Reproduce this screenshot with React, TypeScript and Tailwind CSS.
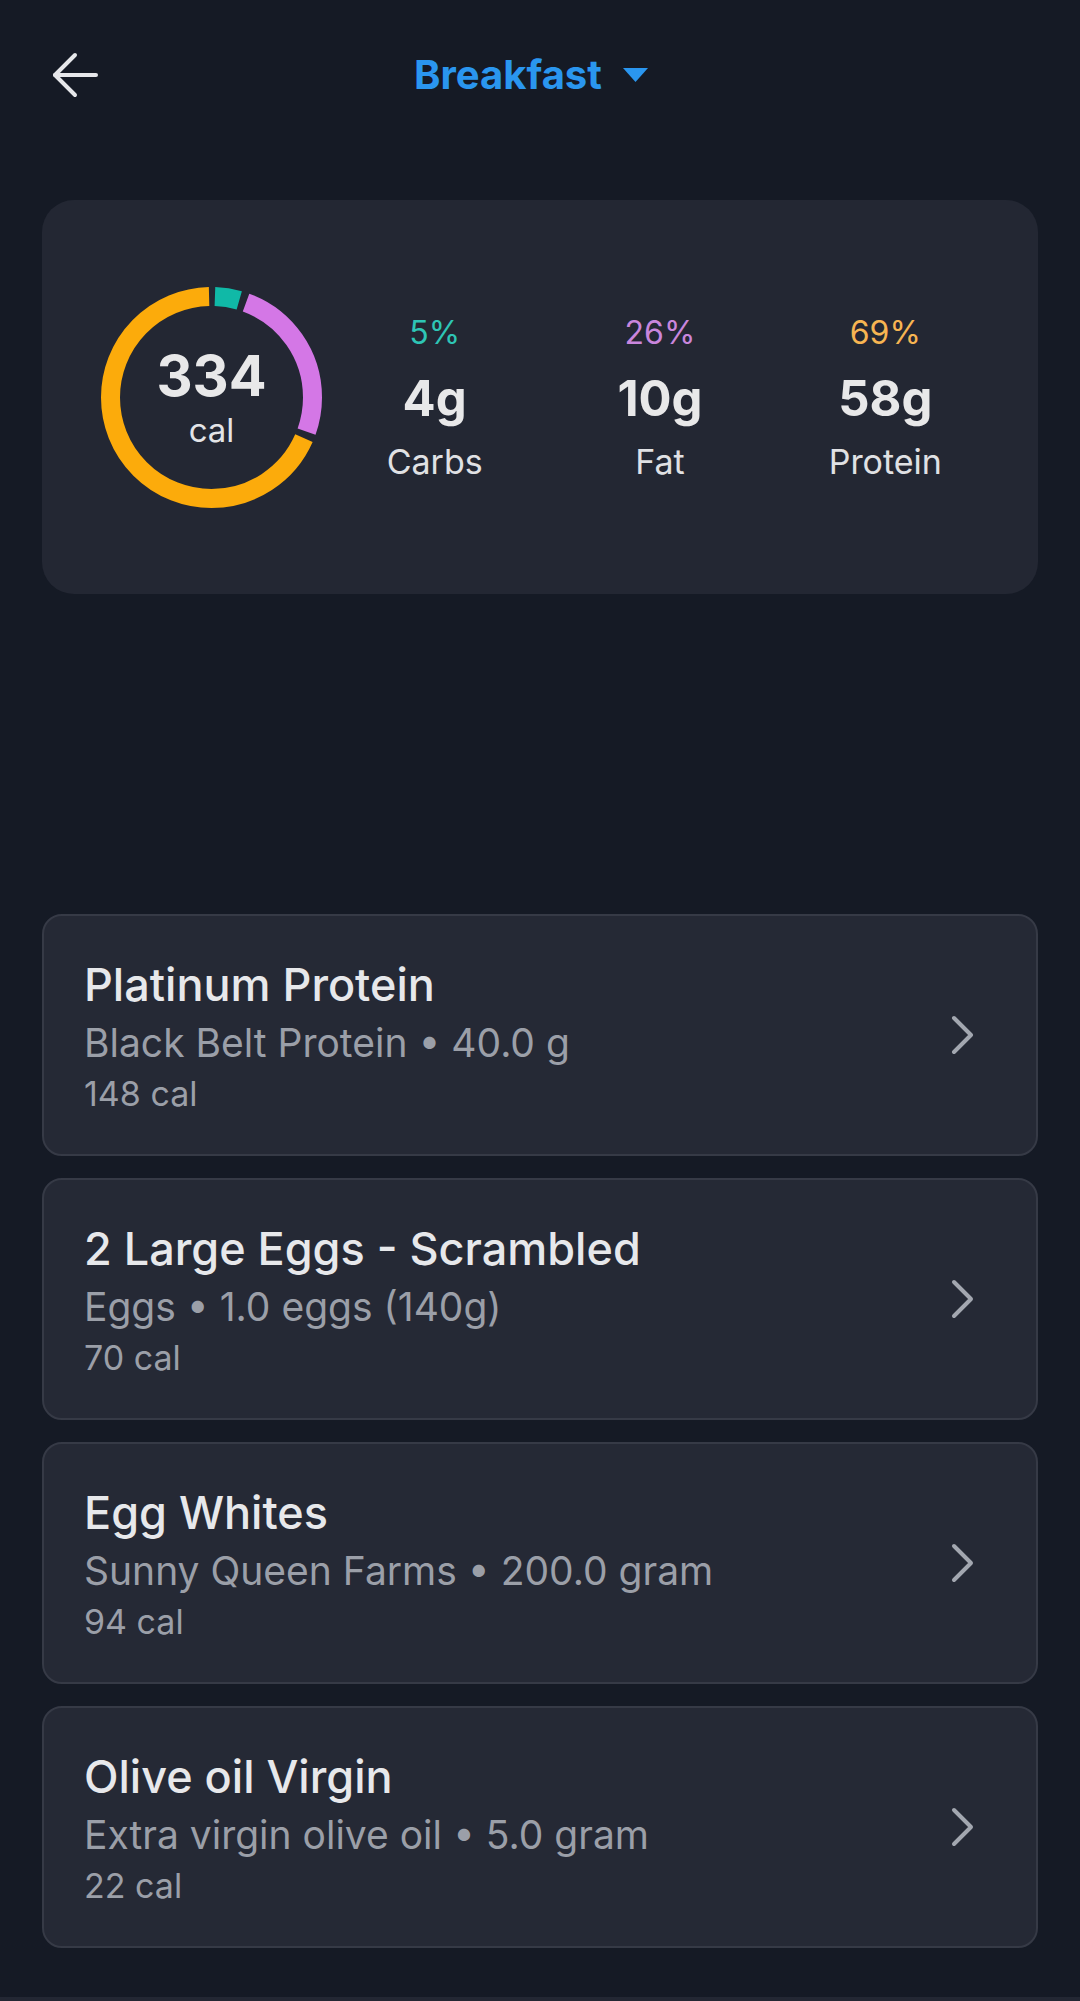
import React from "react";

const C = 2 * Math.PI * 101;

function Ring() {
  const segs = [
    { pct: 0.05, color: "#10b9a7" },
    { pct: 0.26, color: "#d477e6" },
    { pct: 0.69, color: "#fcab0b" },
  ];
  const gap = 4;
  let cum = 0;
  return (
    <div className="relative w-[221px] h-[221px] shrink-0">
      <svg width="221" height="221" viewBox="0 0 221 221" className="absolute inset-0">
        {segs.map((s, i) => {
          const a0 = cum * 360 + gap / 2;
          const len = (s.pct * 360 - gap) / 360 * C;
          const off = -(a0 / 360) * C;
          cum += s.pct;
          return (
            <circle
              key={i}
              cx="110.5"
              cy="110.5"
              r="101"
              fill="none"
              stroke={s.color}
              strokeWidth="19"
              strokeDasharray={`${len} ${C}`}
              strokeDashoffset={off}
              transform="rotate(-90 110.5 110.5)"
            />
          );
        })}
      </svg>
      <div className="absolute inset-0 flex flex-col items-center justify-center">
        <div className="text-[56px] leading-[60px] font-bold text-[#e8e8e9]">334</div>
        <div className="text-[33px] leading-[36px] mt-[6px] text-[#e3e4e7]">cal</div>
      </div>
    </div>
  );
}

function Macro({ pct, val, label, color }: { pct: string; val: string; label: string; color: string }) {
  return (
    <div className="flex-1 flex flex-col items-center">
      <div className={`text-[32px] leading-[40px] ${color}`}>{pct}</div>
      <div className="text-[49px] leading-[56px] mt-[18px] font-bold text-[#e8e8e9]">{val}</div>
      <div className="text-[34px] leading-[40px] mt-[15px] text-[#e0e1e4]">{label}</div>
    </div>
  );
}

function Item({ title, sub, cal }: { title: string; sub: string; cal: string }) {
  return (
    <div className="h-[242px] rounded-[20px] border-2 border-[#363a46] bg-[#252935] flex items-center pl-[40px] pr-[61px]">
      <div className="flex-1 flex flex-col">
        <div className="text-[45px] leading-[56px] font-medium text-[#e7e8eb]">{title}</div>
        <div className="text-[39px] leading-[52px] mt-[4px] text-[#9b9fa8]">{sub}</div>
        <div className="text-[34px] leading-[40px] mt-[5px] text-[#9b9fa8]">{cal}</div>
      </div>
      <svg width="25" height="40" viewBox="0 0 25 40" className="shrink-0">
        <polyline points="4,3 21,20 4,37" fill="none" stroke="#a3a7b0" strokeWidth="4" strokeLinecap="round" strokeLinejoin="round" />
      </svg>
    </div>
  );
}

export default function App() {
  return (
    <div className="w-full min-h-[2001px] bg-[#151a25] flex flex-col font-[family-name:Inter,sans-serif]">
      <div className="h-[150px] grid grid-cols-[1fr_auto_1fr] items-center">
        <div className="pl-[52px] flex items-center">
          <svg width="46" height="46" viewBox="0 0 46 46">
            <polyline points="23,3 3,23 23,43" fill="none" stroke="#e6e7ea" strokeWidth="4" strokeLinecap="round" strokeLinejoin="round" />
            <line x1="3" y1="23" x2="44" y2="23" stroke="#e6e7ea" strokeWidth="4" strokeLinecap="round" />
          </svg>
        </div>
        <div className="flex items-center gap-[21px] pr-[18px]">
          <span className="text-[40px] leading-[48px] font-bold text-[#2a96ef]">Breakfast</span>
          <svg width="25" height="14" viewBox="0 0 25 14">
            <polygon points="0,0 25,0 12.5,14" fill="#2a96ef" />
          </svg>
        </div>
        <div />
      </div>

      <div className="mt-[50px] mx-[42px] h-[394px] rounded-[32px] bg-[#232733] flex items-center pl-[59px] pr-[40px]">
        <Ring />
        <div className="flex-1 flex">
          <Macro pct="5%" val="4g" label="Carbs" color="text-[#2ec5b5]" />
          <Macro pct="26%" val="10g" label="Fat" color="text-[#c986dd]" />
          <Macro pct="69%" val="58g" label="Protein" color="text-[#f7b552]" />
        </div>
      </div>

      <div className="mt-[320px] mx-[42px] flex flex-col gap-[22px]">
        <Item title="Platinum Protein" sub="Black Belt Protein • 40.0 g" cal="148 cal" />
        <Item title="2 Large Eggs - Scrambled" sub="Eggs • 1.0 eggs (140g)" cal="70 cal" />
        <Item title="Egg Whites" sub="Sunny Queen Farms • 200.0 gram" cal="94 cal" />
        <Item title="Olive oil Virgin" sub="Extra virgin olive oil • 5.0 gram" cal="22 cal" />
      </div>

      <div className="flex-1" />
      <div className="h-[4px] bg-[#232733]" />
    </div>
  );
}
